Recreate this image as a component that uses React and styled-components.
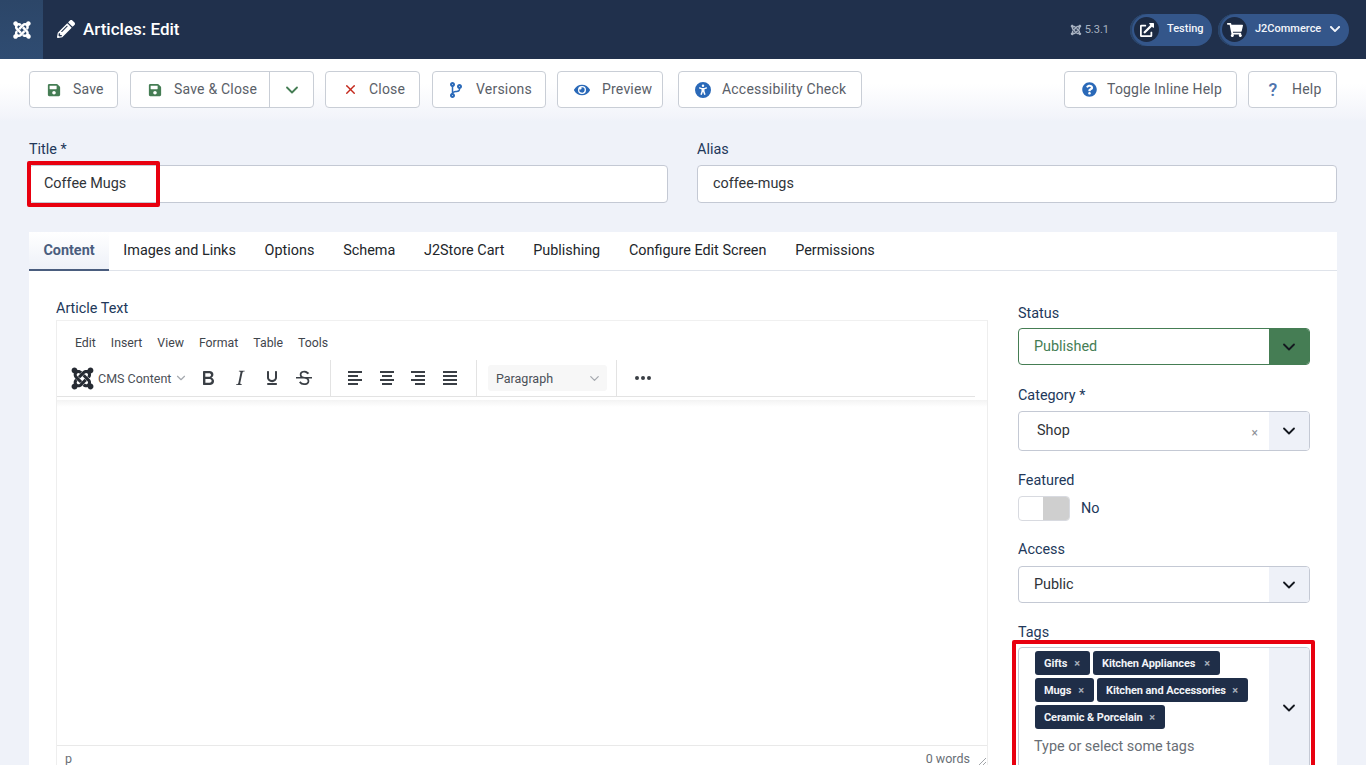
import React from 'react';
import styled, { createGlobalStyle } from 'styled-components';
import {
  FaJoomla,
  FaPencilAlt,
  FaSave,
  FaCodeBranch,
  FaEye,
  FaQuestionCircle,
  FaExternalLinkAlt,
  FaShoppingCart,
  FaChevronDown,
} from 'react-icons/fa';
import { FaUniversalAccess } from 'react-icons/fa6';
import { ChevronDown, X } from 'lucide-react';

const GlobalStyle = createGlobalStyle`
  html, body {
    margin: 0;
    padding: 0;
    height: 100%;
    overflow: hidden;
    background: #eff2f9;
    font-family: Roboto, "Liberation Sans", sans-serif;
    color: #22262a;
  }
  * { box-sizing: border-box; }
`;

const Page = styled.div`
  width: 1366px;
  height: 765px;
  overflow: hidden;
`;

// header
const Header = styled.header`
  height: 59px;
  background: #20304c;
  display: flex;
  align-items: center;
  color: #fff;
`;

const LogoBox = styled.div`
  width: 43px;
  height: 59px;
  background: linear-gradient(180deg, #2c4668, #2f4c72);
  display: flex;
  align-items: center;
  justify-content: center;
  font-size: 20px;
`;

const PageTitle = styled.h1`
  margin: 0 0 0 14px;
  padding-bottom: 1px;
  display: flex;
  align-items: center;
  gap: 8px;
  font-size: 17px;
  font-weight: 500;
  flex: 1;
  svg { font-size: 18px; }
`;

const Version = styled.span`
  display: flex;
  align-items: center;
  gap: 3px;
  font-size: 11px;
  color: #a9b3c2;
  margin-right: 21px;
  svg { font-size: 12px; }
`;

const Pill = styled.div`
  height: 32px;
  width: ${(p) => p.$width}px;
  margin-right: ${(p) => p.$gap}px;
  border-radius: 16px;
  background: #34568a;
  display: flex;
  align-items: center;
  padding-left: 4px;
  font-size: 11px;
  font-weight: 500;
  color: #f2f5fa;
  box-shadow: inset 2px 0 0 #2a4468;
`;

const PillText = styled.span`
  margin-bottom: 3px;
`;

const PillIcon = styled.span`
  width: 25px;
  height: 25px;
  border-radius: 50%;
  background: #1c2a43;
  color: #fff;
  display: flex;
  align-items: center;
  justify-content: center;
  font-size: ${(p) => p.$size}px;
  margin-right: 8px;
`;

const PillChevron = styled.span`
  display: flex;
  margin: 0 0 1px 8px;
  font-size: 12px;
`;

// toolbar
const Toolbar = styled.div`
  height: 62px;
  background: linear-gradient(180deg, #ffffff 0%, #ffffff 40%, #f2f4fa 95%, #eff2f9 100%);
  padding: 12px 29px 0;
  display: flex;
  align-items: flex-start;
`;

const ToolButton = styled.div`
  height: 37px;
  width: ${(p) => p.$width}px;
  margin-right: ${(p) => p.$gap || 0}px;
  margin-left: ${(p) => (p.$push ? 'auto' : '0')};
  display: flex;
  align-items: center;
  background: #fff;
  border: 1px solid #c9ced6;
  border-radius: 4px;
  font-size: 14px;
  letter-spacing: 0.2px;
  color: #5a6068;
  padding-left: ${(p) => p.$pad}px;
`;

const ToolLabel = styled.span`
  margin-bottom: 2px;
`;

const ToolIcon = styled.span`
  display: flex;
  align-items: center;
  justify-content: center;
  width: 16px;
  height: 18px;
  margin-right: ${(p) => p.$gap}px;
  font-size: ${(p) => p.$size || 15}px;
  font-weight: 500;
  color: ${(p) => p.$color};
`;

const SplitPart = styled.span`
  margin-left: auto;
  width: 44px;
  height: 100%;
  border-left: 1px solid #c9ced6;
  display: flex;
  align-items: center;
  justify-content: center;
  color: #457d54;
`;

// title and alias
const Main = styled.main`
  padding: 19px 29px 0;
`;

const TitleRow = styled.div`
  display: grid;
  grid-template-columns: 639px 640px;
  gap: 29px;
`;

const Field = styled.div`
  position: relative;
`;

const Label = styled.label`
  display: block;
  font-size: 14.4px;
  line-height: 20px;
  color: #22385a;
  margin-bottom: ${(p) => p.$mb ?? 6}px;
`;

const TextInput = styled.div`
  height: 38px;
  background: #fff;
  border: 1px solid #c4c9d4;
  border-radius: 4px;
  display: flex;
  align-items: center;
  padding-left: ${(p) => p.$pad}px;
  padding-bottom: 1px;
  font-size: 14.4px;
  color: #2f3338;
`;

const Highlight = styled.div`
  position: absolute;
  left: ${(p) => p.$left}px;
  top: ${(p) => p.$top}px;
  width: ${(p) => p.$width}px;
  height: ${(p) => p.$height}px;
  border: 4px solid #e8000f;
  border-radius: 2px;
  pointer-events: none;
`;

// tabs
const Panel = styled.section`
  margin-top: 29px;
  background: #fff;
  width: 1308px;
`;

const TabBar = styled.div`
  height: 39px;
  display: flex;
  border-bottom: 1px solid #dfe3ea;
`;

const Tab = styled.div`
  height: 39px;
  padding: 0 14.4px;
  display: flex;
  align-items: center;
  font-size: 14.4px;
  font-weight: ${(p) => (p.$active ? 700 : 400)};
  color: ${(p) => (p.$active ? '#4a5d7e' : '#22262a')};
  background: ${(p) => (p.$active ? 'linear-gradient(180deg, #fff, #eef1f8)' : 'none')};
  border-bottom: 2px solid ${(p) => (p.$active ? '#4a5d7e' : 'transparent')};
`;

const PanelBody = styled.div`
  display: grid;
  grid-template-columns: 932px 292px;
  gap: 30px;
  padding: 28px 27px 0;
`;

// editor
const Editor = styled.div`
  height: 459px;
  border: 1px solid #eeeeee;
  border-top-color: #f0f0f0;
  margin-top: -1px;
  display: flex;
  flex-direction: column;
`;

const MenuBar = styled.div`
  height: 39px;
  display: flex;
  align-items: flex-end;
  padding: 0 0 10px 18px;
  gap: 15px;
  font-size: 12.3px;
  color: #3f454c;
`;

const EditorTools = styled.div`
  height: 37px;
  margin: 0 12px 0 0;
  display: flex;
  align-items: center;
  border-bottom: 1px solid #e3e3e3;
  color: #3a3f45;
`;

const ToolGroup = styled.div`
  height: 36px;
  display: flex;
  align-items: center;
  gap: ${(p) => p.$gap || 0}px;
  padding: ${(p) => p.$padding};
  border-right: ${(p) => (p.$last ? 'none' : '1px solid #e3e3e3')};
`;

const CmsButton = styled.span`
  display: flex;
  align-items: center;
  font-size: 12.5px;
  color: #4b5057;
  gap: 3px;
  svg:first-child { font-size: 25px; color: #262b33; }
  svg:last-child { color: #a5a9af; }
`;

const FormatSelect = styled.span`
  width: 119px;
  height: 26px;
  padding: 0 5px 0 8px;
  background: #f7f7f7;
  border-radius: 3px;
  display: flex;
  align-items: center;
  justify-content: space-between;
  font-size: 12.5px;
  color: #4b5057;
  svg { color: #a5a9af; }
`;

const Glyph = styled.svg`
  width: 24px;
  height: 24px;
  fill: currentColor;
  display: block;
`;

const EditorShadow = styled.div`
  height: 7px;
  margin-top: 3px;
  background: linear-gradient(180deg, #f3f3f3, #ffffff);
`;

const EditorArea = styled.div`
  flex: 1;
`;

const StatusLine = styled.div`
  height: 33px;
  padding: 5px 0 0 8px;
  border-top: 1px solid #e9e9e9;
  display: flex;
  justify-content: space-between;
  font-size: 12.5px;
  color: #6a6f76;
`;

const WordCount = styled.span`
  display: flex;
  gap: 7px;
`;

const Grip = styled.svg`
  width: 10px;
  height: 10px;
  margin-top: 6px;
  stroke: #a0a4a9;
  fill: none;
`;

// sidebar
const Sidebar = styled.aside`
  display: flex;
  flex-direction: column;
  margin-top: 5px;
`;

const Select = styled.div`
  height: ${(p) => p.$height}px;
  margin-bottom: ${(p) => p.$mb}px;
  display: flex;
  background: #fff;
  border: 1px solid ${(p) => (p.$green ? '#457d54' : '#c4c9d4')};
  border-radius: 4px;
  font-size: 14.4px;
  color: ${(p) => (p.$green ? '#457d54' : '#2f3338')};
  overflow: hidden;
`;

const SelectValue = styled.div`
  flex: 1;
  display: flex;
  align-items: center;
  padding-left: ${(p) => p.$pad || 15}px;
  padding-bottom: ${(p) => (p.$lift ? 2 : 0)}px;
`;

const ClearMark = styled.span`
  margin-left: auto;
  margin-right: 11px;
  margin-top: 5px;
  font-size: 12px;
  color: #8d9197;
`;

const SelectArrow = styled.div`
  width: 40px;
  display: flex;
  align-items: center;
  justify-content: center;
  background: ${(p) => (p.$green ? '#457d54' : '#eef1f8')};
  color: #14181f;
`;

const SwitchRow = styled.div`
  display: flex;
  align-items: center;
  gap: 11px;
  margin-bottom: 19px;
  font-size: 14.4px;
  color: #22385a;
`;

const Switch = styled.div`
  width: 52px;
  height: 25px;
  border-radius: 4px;
  background: #fff;
  border: 1px solid #d8dae0;
  display: flex;
  justify-content: flex-end;
  overflow: hidden;
`;

const SwitchKnob = styled.span`
  width: 26px;
  background: #cfcfcf;
`;

const TagsWrap = styled.div`
  position: relative;
  margin-top: -2px;
`;

const TagsBox = styled.div`
  height: 160px;
  display: flex;
  background: #fff;
  border: 1px solid #c4c9d4;
  border-radius: 4px;
  overflow: hidden;
`;

const TagsInner = styled.div`
  flex: 1;
  padding: 3px 0 0 16px;
`;

const TagList = styled.div`
  display: flex;
  flex-wrap: wrap;
  gap: 3px;
  width: 218px;
`;

const TagChip = styled.span`
  height: 24px;
  width: ${(p) => p.$width}px;
  display: flex;
  align-items: center;
  justify-content: space-between;
  padding: 0 10px 0 9px;
  border-radius: 3px;
  background: #1f2e48;
  color: #f1f3f7;
  font-size: 11px;
  font-weight: 700;
  letter-spacing: -0.1px;
  white-space: nowrap;
`;

const TagClose = styled.span`
  color: #a6aebb;
  font-size: 11px;
`;

const TagPlaceholder = styled.div`
  margin: 9px 0 0 -1px;
  font-size: 14.4px;
  color: #696e75;
`;

const TagsArrow = styled.div`
  width: 40px;
  height: 119px;
  display: flex;
  align-items: center;
  justify-content: center;
  color: #14181f;
`;

const TagsArrowBg = styled.div`
  width: 40px;
  background: #eef1f8;
`;

const Chev = ({ size = 20 }) => <ChevronDown size={size} strokeWidth={2.2} />;

const ALIGN_PATHS = {
  left: 'M5 5h14v2H5zM5 9h10v2H5zM5 13h14v2H5zM5 17h10v2H5z',
  center: 'M5 5h14v2H5zM7 9h10v2H7zM5 13h14v2H5zM7 17h10v2H7z',
  right: 'M5 5h14v2H5zM9 9h10v2H9zM5 13h14v2H5zM9 17h10v2H9z',
  justify: 'M5 5h14v2H5zM5 9h14v2H5zM5 13h14v2H5zM5 17h14v2H5z',
};

const FORMAT_PATHS = {
  bold: 'M7.8 19c-.3 0-.5 0-.6-.2l-.2-.5V5.7c0-.2 0-.4.2-.5l.6-.2h5c1.5 0 2.7.3 3.5 1 .7.6 1.1 1.4 1.1 2.5a3 3 0 0 1-.6 1.9c-.4.6-1 1-1.6 1.2.4.1.9.3 1.3.6s.8.7 1 1.2c.4.4.5 1 .5 1.6 0 1.3-.4 2.3-1.3 3-.8.7-2.1 1-3.8 1H7.8zm5-8.3c.6 0 1.2-.1 1.6-.5.4-.3.6-.7.6-1.3 0-1.1-.8-1.7-2.3-1.7H9.3v3.5h3.4zm.5 6c.7 0 1.3-.1 1.7-.4.4-.4.6-.9.6-1.5s-.2-1-.7-1.4c-.4-.3-1-.4-2-.4H9.4v3.8h4z',
  italic: 'M16.7 4.7l-.1.9h-.3c-.6 0-1 0-1.4.3-.3.3-.4.6-.5 1.1l-2.1 9.8v.6c0 .5.4.8 1.4.8h.2l-.2.8H8l.2-.8h.2c1.1 0 1.8-.5 2-1.5l2-9.8.1-.5c0-.6-.4-.8-1.4-.8h-.3l.2-.9h5.8z',
  underline: 'M16 5c.6 0 1 .4 1 1v5.5a4 4 0 0 1-.4 1.8l-1 1.4a5.3 5.3 0 0 1-5.5 1 5 5 0 0 1-1.6-1c-.5-.4-.8-.9-1.1-1.4a4 4 0 0 1-.4-1.8V6c0-.6.4-1 1-1s1 .4 1 1v5.5c0 .3 0 .6.2 1l.6.7a3.3 3.3 0 0 0 2.2.8 3.4 3.4 0 0 0 2.2-.8c.3-.2.4-.5.6-.8l.2-.9V6c0-.6.4-1 1-1zM8 17h8c.6 0 1 .4 1 1s-.4 1-1 1H8a1 1 0 0 1 0-2z',
  strike: 'M15.6 8.5c-.5-.7-1-1.1-1.3-1.3-.6-.4-1.3-.6-2-.6-2.7 0-2.8 1.7-2.8 2.1 0 1.6 1.8 2 3.2 2.3 4.4.9 4.6 2.8 4.6 3.9 0 1.4-.7 4.1-5 4.1A6.2 6.2 0 0 1 7 16.4l1.5-1.1c.4.6 1.6 2 3.7 2 1.6 0 2.5-.4 3-1 .3-.4.4-.9.4-1.4 0-1.6-2.4-2.1-3.5-2.3-2.2-.5-4.3-1-4.3-3.9 0-1 .3-3.9 4.6-3.9a6 6 0 0 1 3.5 1.1c.5.3 1 .8 1.4 1.3l-1.7.8zM4 11h16v1.5H4z',
  dots: 'M6 10a2 2 0 1 0 0 4 2 2 0 0 0 0-4zm6 0a2 2 0 1 0 0 4 2 2 0 0 0 0-4zm6 0a2 2 0 1 0 0 4 2 2 0 0 0 0-4z',
};

const Icon = ({ d }) => (
  <Glyph viewBox="0 0 24 24">
    <path d={d} />
  </Glyph>
);

const toolButtons = [
  { label: 'Save', width: 89, gap: 12, pad: 16, iconGap: 11, icon: <FaSave />, color: '#457d54', size: 14 },
  { label: 'Save & Close', width: 184, gap: 11, pad: 16, iconGap: 11, icon: <FaSave />, color: '#457d54', size: 14, split: true },
  { label: 'Close', width: 95, gap: 12, pad: 16, iconGap: 11, icon: <X size={15} strokeWidth={2.2} />, color: '#c4281c' },
  { label: 'Versions', width: 114, gap: 11, pad: 15, iconGap: 12, icon: <FaCodeBranch />, color: '#2a69b8', size: 16 },
  { label: 'Preview', width: 106, gap: 15, pad: 16, iconGap: 12, icon: <FaEye />, color: '#2a69b8', size: 16 },
  { label: 'Accessibility Check', width: 184, pad: 16, iconGap: 11, icon: <FaUniversalAccess />, color: '#2a69b8', size: 16 },
  { label: 'Toggle Inline Help', width: 173, gap: 11, pad: 16, iconGap: 10, icon: <FaQuestionCircle />, color: '#2a69b8', push: true },
  { label: 'Help', width: 89, pad: 16, iconGap: 11, icon: '?', color: '#4f74ad', size: 18 },
];

const tabs = ['Content', 'Images and Links', 'Options', 'Schema', 'J2Store Cart', 'Publishing', 'Configure Edit Screen', 'Permissions'];
const menus = ['Edit', 'Insert', 'View', 'Format', 'Table', 'Tools'];

const tagRows = [
  { name: 'Gifts', width: 55 },
  { name: 'Kitchen Appliances', width: 127 },
  { name: 'Mugs', width: 59 },
  { name: 'Kitchen and Accessories', width: 151 },
  { name: 'Ceramic & Porcelain', width: 130 },
];

export default function App() {
  return (
    <Page>
      <GlobalStyle />
      <Header>
        <LogoBox><FaJoomla /></LogoBox>
        <PageTitle><FaPencilAlt />Articles: Edit</PageTitle>
        <Version><FaJoomla />5.3.1</Version>
        <Pill $width={82} $gap={6}>
          <PillIcon $size={14}><FaExternalLinkAlt /></PillIcon>
          <PillText>Testing</PillText>
        </Pill>
        <Pill $width={131} $gap={17}>
          <PillIcon $size={16}><FaShoppingCart /></PillIcon>
          <PillText>J2Commerce</PillText>
          <PillChevron><FaChevronDown /></PillChevron>
        </Pill>
      </Header>

      <Toolbar>
        {toolButtons.map((b) => (
          <ToolButton key={b.label} $width={b.width} $gap={b.gap} $pad={b.pad} $push={b.push}>
            <ToolIcon $color={b.color} $gap={b.iconGap} $size={b.size}>{b.icon}</ToolIcon>
            <ToolLabel>{b.label}</ToolLabel>
            {b.split && <SplitPart><Chev /></SplitPart>}
          </ToolButton>
        ))}
      </Toolbar>

      <Main>
        <TitleRow>
          <Field>
            <Label $mb={5}>Title *</Label>
            <TextInput $pad={14}>Coffee Mugs</TextInput>
            <Highlight $left={-2} $top={21} $width={133} $height={46} />
          </Field>
          <Field>
            <Label $mb={5}>Alias</Label>
            <TextInput $pad={15}>coffee-mugs</TextInput>
          </Field>
        </TitleRow>

        <Panel>
          <TabBar>
            {tabs.map((t, i) => (
              <Tab key={t} $active={i === 0}>{t}</Tab>
            ))}
          </TabBar>
          <PanelBody>
            <div>
              <Label $mb={2}>Article Text</Label>
              <Editor>
                <MenuBar>
                  {menus.map((m) => <span key={m}>{m}</span>)}
                </MenuBar>
                <EditorTools>
                  <ToolGroup $gap={8} $padding="0 14px 0 13px">
                    <CmsButton><FaJoomla />CMS Content<ChevronDown size={14} /></CmsButton>
                    <Icon d={FORMAT_PATHS.bold} />
                    <Icon d={FORMAT_PATHS.italic} />
                    <Icon d={FORMAT_PATHS.underline} />
                    <Icon d={FORMAT_PATHS.strike} />
                  </ToolGroup>
                  <ToolGroup $gap={7.5} $padding="0 14px 0 12px">
                    <Icon d={ALIGN_PATHS.left} />
                    <Icon d={ALIGN_PATHS.center} />
                    <Icon d={ALIGN_PATHS.right} />
                    <Icon d={ALIGN_PATHS.justify} />
                  </ToolGroup>
                  <ToolGroup $padding="0 9px 0 11px">
                    <FormatSelect>Paragraph<ChevronDown size={15} /></FormatSelect>
                  </ToolGroup>
                  <ToolGroup $last $padding="0 0 0 14px">
                    <Icon d={FORMAT_PATHS.dots} />
                  </ToolGroup>
                </EditorTools>
                <EditorShadow />
                <EditorArea />
                <StatusLine>
                  <span>p</span>
                  <WordCount>0 words
                    <Grip viewBox="0 0 10 10"><path d="M1 9L9 1M5 9L9 5" /></Grip>
                  </WordCount>
                </StatusLine>
              </Editor>
            </div>

            <Sidebar>
              <Label $mb={4}>Status</Label>
              <Select $green $height={37} $mb={21}>
                <SelectValue>Published</SelectValue>
                <SelectArrow $green><Chev /></SelectArrow>
              </Select>

              <Label $mb={5}>Category *</Label>
              <Select $height={40} $mb={20}>
                <SelectValue $pad={18} $lift>
                  Shop<ClearMark>×</ClearMark>
                </SelectValue>
                <SelectArrow><Chev /></SelectArrow>
              </Select>

              <Label $mb={5}>Featured</Label>
              <SwitchRow>
                <Switch><SwitchKnob /></Switch>No
              </SwitchRow>

              <Label>Access</Label>
              <Select $height={37} $mb={20}>
                <SelectValue>Public</SelectValue>
                <SelectArrow><Chev /></SelectArrow>
              </Select>

              <Label>Tags</Label>
              <TagsWrap>
                <TagsBox>
                  <TagsInner>
                    <TagList>
                      {tagRows.map((t) => (
                        <TagChip key={t.name} $width={t.width}>{t.name}<TagClose>×</TagClose></TagChip>
                      ))}
                    </TagList>
                    <TagPlaceholder>Type or select some tags</TagPlaceholder>
                  </TagsInner>
                  <TagsArrowBg><TagsArrow><Chev /></TagsArrow></TagsArrowBg>
                </TagsBox>
                <Highlight $left={-6} $top={-7} $width={303} $height={170} />
              </TagsWrap>
            </Sidebar>
          </PanelBody>
        </Panel>
      </Main>
    </Page>
  );
}
